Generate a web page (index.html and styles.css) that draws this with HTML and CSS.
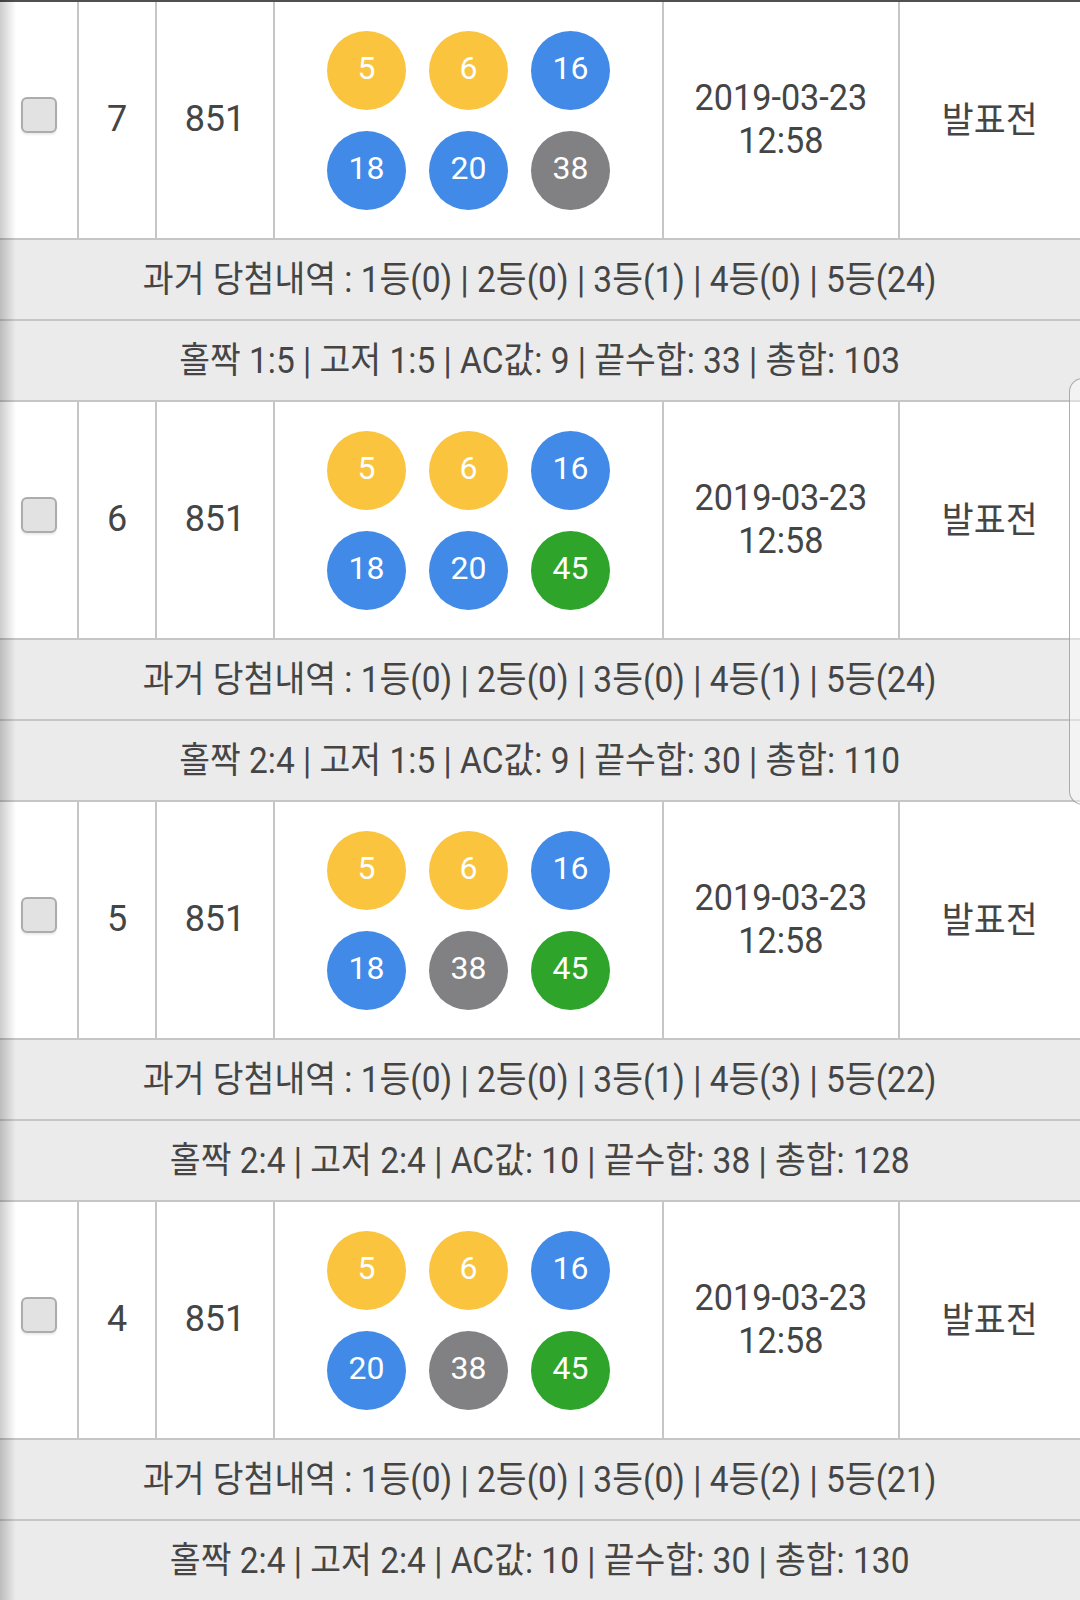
FILE: index.html
```html
<!DOCTYPE html>
<html lang="ko">
<head>
<meta charset="utf-8">
<title>번호 목록</title>
<link rel="stylesheet" href="styles.css">
</head>
<body>
<div class="list">
  <div class="block">
    <div class="main">
      <div class="cell chk"><input type="checkbox" class="cb"></div>
      <div class="cell num"><span class="t">7</span></div>
      <div class="cell num"><span class="t">851</span></div>
      <div class="cell balls">
        <span class="ball y">5</span><span class="ball y">6</span><span class="ball b">16</span>
        <span class="ball b">18</span><span class="ball b">20</span><span class="ball g">38</span>
      </div>
      <div class="cell date"><span class="t">2019-03-23<br>12:58</span></div>
      <div class="cell status"><span class="t">발표전</span></div>
    </div>
    <div class="info"><span class="t">과거 당첨내역 : 1등(0) | 2등(0) | 3등(1) | 4등(0) | 5등(24)</span></div>
    <div class="info"><span class="t">홀짝 1:5 | 고저 1:5 | AC값: 9 | 끝수합: 33 | 총합: 103</span></div>
  </div>
  <div class="block">
    <div class="main">
      <div class="cell chk"><input type="checkbox" class="cb"></div>
      <div class="cell num"><span class="t">6</span></div>
      <div class="cell num"><span class="t">851</span></div>
      <div class="cell balls">
        <span class="ball y">5</span><span class="ball y">6</span><span class="ball b">16</span>
        <span class="ball b">18</span><span class="ball b">20</span><span class="ball gr">45</span>
      </div>
      <div class="cell date"><span class="t">2019-03-23<br>12:58</span></div>
      <div class="cell status"><span class="t">발표전</span></div>
    </div>
    <div class="info"><span class="t">과거 당첨내역 : 1등(0) | 2등(0) | 3등(0) | 4등(1) | 5등(24)</span></div>
    <div class="info"><span class="t">홀짝 2:4 | 고저 1:5 | AC값: 9 | 끝수합: 30 | 총합: 110</span></div>
  </div>
  <div class="block">
    <div class="main">
      <div class="cell chk"><input type="checkbox" class="cb"></div>
      <div class="cell num"><span class="t">5</span></div>
      <div class="cell num"><span class="t">851</span></div>
      <div class="cell balls">
        <span class="ball y">5</span><span class="ball y">6</span><span class="ball b">16</span>
        <span class="ball b">18</span><span class="ball g">38</span><span class="ball gr">45</span>
      </div>
      <div class="cell date"><span class="t">2019-03-23<br>12:58</span></div>
      <div class="cell status"><span class="t">발표전</span></div>
    </div>
    <div class="info"><span class="t">과거 당첨내역 : 1등(0) | 2등(0) | 3등(1) | 4등(3) | 5등(22)</span></div>
    <div class="info"><span class="t">홀짝 2:4 | 고저 2:4 | AC값: 10 | 끝수합: 38 | 총합: 128</span></div>
  </div>
  <div class="block">
    <div class="main">
      <div class="cell chk"><input type="checkbox" class="cb"></div>
      <div class="cell num"><span class="t">4</span></div>
      <div class="cell num"><span class="t">851</span></div>
      <div class="cell balls">
        <span class="ball y">5</span><span class="ball y">6</span><span class="ball b">16</span>
        <span class="ball b">20</span><span class="ball g">38</span><span class="ball gr">45</span>
      </div>
      <div class="cell date"><span class="t">2019-03-23<br>12:58</span></div>
      <div class="cell status"><span class="t">발표전</span></div>
    </div>
    <div class="info"><span class="t">과거 당첨내역 : 1등(0) | 2등(0) | 3등(0) | 4등(2) | 5등(21)</span></div>
    <div class="info"><span class="t">홀짝 2:4 | 고저 2:4 | AC값: 10 | 끝수합: 30 | 총합: 130</span></div>
  </div>
</div>
<div class="edge-shadow"></div>
<div class="edge-handle"></div>
</body>
</html>
```

FILE: styles.css
```css
html, body {
  margin: 0;
  padding: 0;
  background: #ffffff;
}
body {
  font-family: Roboto, "Noto Sans CJK KR", sans-serif;
  color: #454545;
  width: 1080px;
  height: 1600px;
  overflow: hidden;
  position: relative;
}
.list {
  border-top: 2px solid #505050;
}
.block {
  display: flex;
  flex-direction: column;
}
.main {
  display: grid;
  grid-template-columns: 77px 78px 118px 389px 236px 1fr;
  border-bottom: 2px solid #c6c6c6;
  box-sizing: border-box;
  height: 238px;
}
.cell {
  display: flex;
  align-items: center;
  justify-content: center;
  box-sizing: border-box;
  border-left: 2px solid #c6c6c6;
  text-align: center;
}
.cell.chk {
  border-left: none;
}
.t {
  display: inline-block;
  white-space: nowrap;
}
.num {
  font-size: 36px;
  padding-bottom: 2px;
}
.status {
  font-size: 36px;
  padding-bottom: 6px;
}
.status .t {
  transform: scaleX(0.965);
}
.date {
  font-size: 36px;
  line-height: 43px;
}
.date .t {
  transform: scaleX(0.95);
}
.cb {
  appearance: none;
  -webkit-appearance: none;
  margin: 0 0 10px 0;
  width: 36px;
  height: 36px;
  box-sizing: border-box;
  border: 2px solid #acacac;
  border-radius: 6px;
  background: #e2e2e2;
  box-shadow: 0 2px 2px rgba(0,0,0,0.08);
}
.balls {
  display: grid;
  grid-template-columns: repeat(3, 79px);
  grid-auto-rows: 79px;
  column-gap: 23px;
  row-gap: 21px;
  align-content: center;
  justify-content: center;
}
.ball {
  width: 79px;
  height: 79px;
  box-sizing: border-box;
  padding-bottom: 4px;
  border-radius: 50%;
  display: flex;
  align-items: center;
  justify-content: center;
  color: #ffffff;
  font-size: 32px;
}
.ball.y { background: #fac43f; }
.ball.b { background: #418ae7; }
.ball.g { background: #818183; }
.ball.gr { background: #2fa42a; }
.info {
  height: 81px;
  box-sizing: border-box;
  border-bottom: 2px solid #c6c6c6;
  background: #ebebeb;
  display: flex;
  align-items: center;
  justify-content: center;
  font-size: 36px;
  padding-bottom: 8px;
}
.info .t {
  transform: scaleX(0.93);
}
.edge-shadow {
  position: absolute;
  left: 0;
  top: 0;
  width: 16px;
  height: 1600px;
  background: linear-gradient(to right, rgba(0,0,0,0.2), rgba(0,0,0,0));
  pointer-events: none;
}
.edge-handle {
  position: absolute;
  left: 1069px;
  top: 378px;
  width: 30px;
  height: 427px;
  box-sizing: border-box;
  border: 1.5px solid rgba(140,140,140,0.7);
  border-radius: 14px;
  background: rgba(255,255,255,0.4);
}
```
